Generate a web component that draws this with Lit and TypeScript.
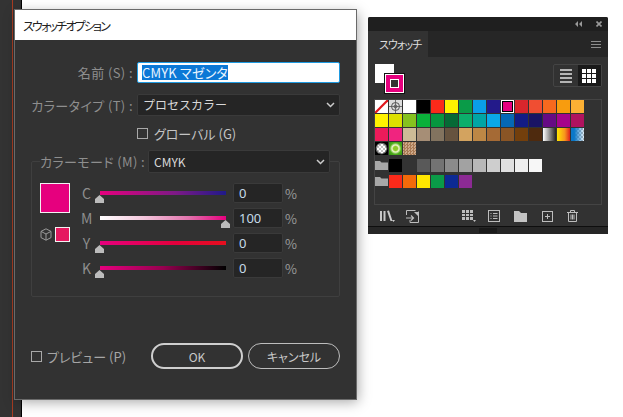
import { LitElement, html, css, svg } from "lit";
import { customElement } from "lit/decorators.js";

const FONT = css`"Noto Sans CJK JP", "Noto Sans", sans-serif`;

const chevron = html`<svg class="chev" width="9" height="6" viewBox="0 0 9 6">
  <path d="M1 1l3.5 3.5L8 1" fill="none" stroke="#ccc" stroke-width="1.5" />
</svg>`;

interface Slider {
  name: string;
  value: number;
  track: string;
}

const SLIDERS: Slider[] = [
  { name: "C", value: 0, track: "linear-gradient(90deg,#e6007e,#7d1a86 60%,#1f1a8a)" },
  { name: "M", value: 100, track: "linear-gradient(90deg,#fff,#f3c6dc 35%,#e274ad 70%,#e6007e)" },
  { name: "Y", value: 0, track: "linear-gradient(90deg,#e6007e,#e4003c 60%,#e60f1e)" },
  { name: "K", value: 0, track: "linear-gradient(90deg,#e6007e,#96004f 50%,#000)" },
];

@customElement("swatch-dialog")
export class SwatchDialog extends LitElement {
  static override styles = css`
    :host {
      display: flex;
      flex-direction: column;
      width: 341px;
      height: 389px;
      background: #323232;
      box-shadow: 0 0 0 1px #6a6a6a, 2px 3px 12px rgba(0, 0, 0, 0.35);
      font-family: ${FONT};
      font-size: 13px;
      font-feature-settings: "palt" 1;
      color: #8e8e8e;
    }
    .title {
      height: 30px;
      flex: none;
      display: flex;
      align-items: center;
      padding-left: 8px;
      background: #fff;
      color: #222;
      font-size: 12px;
      letter-spacing: -1.8px;
    }
    .row {
      display: flex;
      align-items: center;
    }
    .row > label {
      width: 118px;
      margin-right: 4px;
      text-align: right;
      white-space: nowrap;
      letter-spacing: 0.4px;
    }
    .name-row {
      margin-top: 22px;
    }
    .type-row {
      margin-top: 11px;
    }
    .name-input {
      box-sizing: border-box;
      width: 203px;
      height: 21px;
      display: flex;
      align-items: center;
      padding-left: 4px;
      background: #fff;
      border: 1px solid #1f9ae0;
      border-radius: 2px;
      font-size: 13px;
    }
    .name-input span {
      background: #0b78d6;
      color: #e8f4ff;
      line-height: 15px;
      white-space: nowrap;
      letter-spacing: 0.2px;
    }
    .select {
      box-sizing: border-box;
      height: 22px;
      display: flex;
      align-items: center;
      justify-content: space-between;
      padding: 0 4px 0 5px;
      background: #252525;
      border: 1px solid #3a3a3a;
      border-radius: 2px;
      color: #d8d8d8;
      font-size: 12px;
      font-feature-settings: normal;
    }
    .select.wide {
      width: 203px;
      padding-bottom: 1px;
    }
    .check {
      display: flex;
      align-items: center;
      gap: 6px;
      white-space: nowrap;
      color: #c4c4c4;
    }
    .box {
      box-sizing: border-box;
      width: 11px;
      height: 11px;
      border: 1px solid #a8a8a8;
    }
    .global {
      margin: 11px 0 0 122px;
      height: 13px;
    }
    .mode {
      box-sizing: border-box;
      width: 309px;
      height: 136px;
      margin: 21px 0 0 16px;
      border: 1px solid #3f3f3f;
      border-radius: 2px;
    }
    .mode-head {
      display: flex;
      align-items: center;
      height: 23px;
      margin: -12px 9px 0 8px;
    }
    .mode-head label {
      box-sizing: border-box;
      width: 108px;
      white-space: nowrap;
      background: #323232;
      letter-spacing: 0.4px;
    }
    .mode-head .select {
      width: 182px;
      height: 23px;
    }
    .mode-body {
      display: flex;
      padding: 10px 0 0 8px;
    }
    .previews {
      width: 30px;
      display: flex;
      flex-direction: column;
    }
    .big {
      box-sizing: border-box;
      width: 30px;
      height: 30px;
      background: #e6007e;
      border: 1px solid #f2f2f2;
    }
    .gamut {
      display: flex;
      align-items: center;
      justify-content: space-between;
      margin-top: 14px;
    }
    .small {
      box-sizing: border-box;
      width: 15px;
      height: 15px;
      background: #e5195f;
      border: 1px solid #f2f2f2;
    }
    .sliders {
      display: flex;
      flex-direction: column;
      gap: 5px;
      margin-left: 11px;
    }
    .slider-row {
      display: flex;
      align-items: center;
      height: 20px;
    }
    .letter {
      width: 11px;
      text-align: center;
      font-size: 14px;
      color: #8e8e8e;
    }
    .track {
      position: relative;
      width: 126px;
      height: 4px;
      margin: 0 7px 0 8px;
    }
    .thumb {
      position: absolute;
      top: 4px;
      margin-left: -5px;
      display: block;
    }
    .num {
      box-sizing: border-box;
      width: 50px;
      height: 20px;
      display: flex;
      align-items: center;
      padding-left: 5px;
      background: #252525;
      border: 1px solid #3a3a3a;
      border-radius: 2px;
      color: #c6dbe8;
      font-family: "Noto Sans", sans-serif;
      font-size: 13px;
    }
    .pct {
      margin-left: 2px;
      font-size: 13px;
      color: #9a9a9a;
    }
    .footer {
      margin: auto 16px 30px;
      height: 26px;
      display: flex;
      align-items: center;
    }
    .preview {
      width: 120px;
      gap: 5px;
      color: #a6a6a6;
    }
    button {
      box-sizing: border-box;
      width: 92px;
      height: 26px;
      padding: 0;
      background: transparent;
      border: 1px solid #bdbdbd;
      border-radius: 13px;
      color: #c8c8c8;
      font: inherit;
      font-size: 12px;
    }
    button.primary {
      border: 2px solid #cfcfcf;
      margin-right: 5px;
    }
  `;

  override render() {
    return html`
      <div class="title">スウォッチオプション</div>
      <div class="row name-row">
        <label>名前 (S) :</label>
        <div class="name-input"><span>CMYK マゼンタ</span></div>
      </div>
      <div class="row type-row">
        <label>カラータイプ (T) :</label>
        <div class="select wide">プロセスカラー ${chevron}</div>
      </div>
      <div class="check global"><div class="box"></div>グローバル (G)</div>
      <div class="mode">
        <div class="mode-head">
          <label>カラーモード (M) :</label>
          <div class="select">CMYK ${chevron}</div>
        </div>
        <div class="mode-body">
          <div class="previews">
            <div class="big"></div>
            <div class="gamut">
              <svg width="12" height="13" viewBox="0 0 12 13" fill="none" stroke="#9a9a9a">
                <path d="M6 .8l5 2.6v6.2l-5 2.6-5-2.6V3.4zM1 3.4l5 2.6 5-2.6M6 6v6.2" />
              </svg>
              <div class="small"></div>
            </div>
          </div>
          <div class="sliders">
            ${SLIDERS.map(
              (s) => html`<div class="slider-row">
                <span class="letter">${s.name}</span>
                <div class="track" style="background:${s.track}">
                  <svg class="thumb" style="left:${s.value}%" width="9" height="8" viewBox="0 0 9 8">
                    <path d="M4.5 0L9 4v4H0V4z" fill="#bcbcbc" />
                  </svg>
                </div>
                <div class="num">${s.value}</div>
                <span class="pct">%</span>
              </div>`
            )}
          </div>
        </div>
      </div>
      <div class="footer">
        <div class="check preview"><div class="box"></div>プレビュー (P)</div>
        <button class="primary">OK</button>
        <button>キャンセル</button>
      </div>
    `;
  }
}

type Cell = string | { kind: string };

const CHECKER = "repeating-conic-gradient(#bdbdbd 0 25%,#fff 0 50%) 0 0/4px 4px";

const ROWS: Cell[][] = [
  [
    { kind: "none" }, { kind: "reg" }, "#fff", "#000", "#fb2a1a", "#fff200", "#0a9b48", "#0a9ee8",
    "#231a8a", { kind: "selected" }, "#d8262c", "#f04e32", "#f7691e", "#f89c0e", "#fbb034",
  ],
  [
    "#fff200", "#dde000", "#86c21f", "#0bb03a", "#07963f", "#066a36", "#0cae6b", "#00a5a5",
    "#0aa8e8", "#0568b5", "#131c85", "#1a1464", "#660b84", "#a5048b", "#b0135f",
  ],
  [
    "#ec1b5a", "#f0247f", "#cdbb96", "#a68e76", "#82735f", "#66533f", "#d3a35f", "#bd8745",
    "#a56a35", "#8a5525", "#733f0c", "#4e2a0e",
    "linear-gradient(90deg,#fff,#222)",
    "linear-gradient(90deg,#ffe600,#f7941e 60%,#e0201b)",
    `linear-gradient(90deg,#0a78c8,#0a78c8 25%,rgba(10,120,200,.1)),${CHECKER}`,
  ],
  [
    `radial-gradient(circle,rgba(255,255,255,.1) 0 30%,rgba(255,255,255,0) 45%,#000 68%),${CHECKER}`,
    "radial-gradient(circle,#8fca2a 0 22%,#f2f7d0 38%,#4fae1c 62%,#2e8e12)",
    "repeating-conic-gradient(#a97a54 0 25%,#cda98a 0 50%) 0 0/3px 3px",
  ],
];

const GRAYS = [
  "#000", "#333", "#595959", "#737373", "#8b8b8b", "#a2a2a2", "#b8b8b8", "#cecece", "#e0e0e0",
  "#eeeeee", "#f7f7f7",
];
const BRIGHTS = ["#fb2a1a", "#f36a0a", "#ffe600", "#0a9b48", "#0c2a94", "#8c2a94"];

const folder = svg`<path d="M0 2h5l1.5 1.5H13V11H0z" fill="#a8a8a8" />`;

@customElement("swatch-panel")
export class SwatchPanel extends LitElement {
  static override styles = css`
    :host {
      display: flex;
      flex-direction: column;
      width: 240px;
      height: 217px;
      background: #323232;
      font-family: ${FONT};
      font-feature-settings: "palt" 1;
      overflow: hidden;
      border-radius: 2px 2px 0 0;
    }
    .top {
      height: 14px;
      flex: none;
      display: flex;
      align-items: center;
      justify-content: flex-end;
      gap: 14px;
      padding-right: 6px;
      background: #1f1f1f;
    }
    .tabs {
      height: 26px;
      flex: none;
      display: flex;
      align-items: center;
      justify-content: space-between;
      padding-right: 7px;
      background: #262626;
    }
    .tab {
      box-sizing: border-box;
      width: 60px;
      height: 26px;
      display: flex;
      align-items: center;
      padding-left: 11px;
      background: #323232;
      color: #ddd;
      font-size: 11px;
      letter-spacing: -1px;
    }
    .tools {
      display: flex;
      justify-content: space-between;
      flex: none;
      padding: 7px 6px 0 7px;
      box-sizing: border-box;
      height: 42px;
    }
    .fill {
      position: relative;
      width: 19px;
      height: 19px;
      background: #fff;
    }
    .stroke {
      position: absolute;
      left: 10px;
      top: 10px;
      box-sizing: border-box;
      width: 19px;
      height: 19px;
      padding: 4px;
      background: #e6007e;
      border: 1px solid #fff;
      outline: 1px solid #111;
    }
    .stroke div {
      box-sizing: border-box;
      height: 100%;
      background: #333;
      border: 1px solid #fff;
    }
    .toggle {
      display: flex;
      width: 49px;
      height: 23px;
      box-sizing: border-box;
      border: 1px solid #444;
      border-radius: 2px;
    }
    .toggle div {
      flex: 1;
      display: flex;
      align-items: center;
      justify-content: center;
    }
    .toggle .on {
      background: #1a1a1a;
    }
    .list {
      box-sizing: border-box;
      width: 228px;
      height: 106px;
      margin-left: 6px;
      border: 1px solid #444;
      flex: none;
    }
    .cells {
      display: flex;
      height: 14px;
    }
    .cells.group {
      height: 13px;
      margin-top: 3px;
    }
    .cell {
      position: relative;
      width: 13px;
      height: 13px;
      margin-right: 1px;
      flex: none;
    }
    .cell svg {
      display: block;
    }
    .selected {
      box-sizing: border-box;
      background: #e6007e;
      border: 2px solid #000;
    }
    .selected::after {
      content: "";
      position: absolute;
      inset: -2px;
      border: 1px solid #fff;
    }
    .actions {
      display: flex;
      align-items: center;
      height: 20px;
      flex: none;
      padding-left: 12px;
      margin-top: 1px;
    }
    .actions svg {
      display: block;
      flex: none;
    }
    .grip {
      margin-top: auto;
      height: 8px;
      display: flex;
      justify-content: center;
      background: #262626;
      border-top: 1px solid #0e0e0e;
      flex: none;
    }
  `;

  private renderCell(c: Cell) {
    if (typeof c === "string") {
      return html`<div class="cell" style="background:${c}"></div>`;
    }
    if (c.kind === "none") {
      return html`<div class="cell">
        <svg width="13" height="13"><rect width="13" height="13" fill="#fff" />
          <path d="M0 13L13 0" stroke="#e0161c" stroke-width="2.2" /></svg>
      </div>`;
    }
    if (c.kind === "reg") {
      return html`<div class="cell">
        <svg width="13" height="13" fill="none" stroke="#555"><rect width="13" height="13" fill="#ddd" stroke="none" />
          <circle cx="6.5" cy="6.5" r="4" /><circle cx="6.5" cy="6.5" r="1.5" />
          <path d="M6.5 0v13M0 6.5h13" stroke-width=".8" /></svg>
      </div>`;
    }
    return html`<div class="cell selected"></div>`;
  }

  override render() {
    return html`
      <div class="top">
        <svg width="7" height="6" viewBox="0 0 7 6"><path d="M3 0v6L0 3zM7 0v6L4 3z" fill="#9a9a9a" /></svg>
        <svg width="6" height="6" viewBox="0 0 6 6"><path d="M.5.5l5 5M5.5.5l-5 5" stroke="#9a9a9a" stroke-width="1.6" /></svg>
      </div>
      <div class="tabs">
        <div class="tab">スウォッチ</div>
        <svg width="10" height="7" viewBox="0 0 10 7"><path d="M0 .5h10M0 3.5h10M0 6.5h10" stroke="#8c8c8c" /></svg>
      </div>
      <div class="tools">
        <div class="fill"><div class="stroke"><div></div></div></div>
        <div class="toggle">
          <div>
            <svg width="12" height="14" viewBox="0 0 12 14"><path d="M0 1h12M0 5h12M0 9h12M0 13h12" stroke="#b4b4b4" stroke-width="2" /></svg>
          </div>
          <div class="on">
            <svg width="14" height="14" viewBox="0 0 14 14" fill="#fff">
              <path d="M0 0h4v4H0zM5 0h4v4H5zM10 0h4v4h-4zM0 5h4v4H0zM5 5h4v4H5zM10 5h4v4h-4zM0 10h4v4H0zM5 10h4v4H5zM10 10h4v4h-4z" />
            </svg>
          </div>
        </div>
      </div>
      <div class="list">
        ${ROWS.map((r) => html`<div class="cells">${r.map((c) => this.renderCell(c))}</div>`)}
        <div class="cells group">
          <div class="cell"><svg width="13" height="13">${folder}</svg></div>
          ${GRAYS.map((c) => this.renderCell(c))}
        </div>
        <div class="cells group">
          <div class="cell"><svg width="13" height="13">${folder}</svg></div>
          ${BRIGHTS.map((c) => this.renderCell(c))}
        </div>
      </div>
      <div class="actions">
        <svg width="15" height="12" viewBox="0 0 15 12" style="margin-right:11px">
          <path d="M0 1h2v10H0zM3.500 1h2v10h-2zM7 1l2-.5L12.500 11h-2z" fill="#c8c8c8" /><path d="M12 10h3l-1.500 2z" fill="#c8c8c8" />
        </svg>
        <svg width="14" height="13" viewBox="0 0 14 13" fill="none" stroke="#bdbdbd" style="margin-right:42px">
          <path d="M.5 5V.5h9M12.500 1.500v11H4V10" /><path d="M8 2h4.500v4.500z" fill="#bdbdbd" stroke="none" /><path d="M0 8h7M5 5.500L7.500 8 5 10.500" stroke-width="1.200" />
        </svg>
        <svg width="14" height="12" viewBox="0 0 14 12" style="margin-right:12px">
          <path d="M0 0h11v10H0z" fill="#bdbdbd" /><path d="M3.500 0v10M7.500 0v10M0 3.500h11M0 6.500h11" stroke="#333" /><path d="M11 10h3l-1.500 2z" fill="#bdbdbd" />
        </svg>
        <svg width="12" height="12" viewBox="0 0 12 12" fill="none" stroke="#bdbdbd" style="margin-right:14px">
          <rect x=".5" y=".5" width="11" height="11" /><path d="M2.500 3.500h1M5 3.500h4.500M2.500 6h1M5 6h4.500M2.500 8.500h1M5 8.500h4.500" />
        </svg>
        <svg width="13" height="11" viewBox="0 0 13 11" style="margin-right:15px"><path d="M0 0h5l2 2h6v9H0z" fill="#c4c4c4" /></svg>
        <svg width="11" height="11" viewBox="0 0 11 11" fill="none" stroke="#bdbdbd" style="margin-right:14px">
          <rect x=".5" y=".5" width="10" height="10" /><path d="M5.500 3v5M3 5.500h5" />
        </svg>
        <svg width="11" height="12" viewBox="0 0 11 12" fill="none" stroke="#bdbdbd">
          <path d="M0 2.500h11M3.500 2.500V.5h4v2M1.500 2.500v9h8v-9M4 4.500v5M5.500 4.500v5M7 4.500v5" />
        </svg>
      </div>
      <div class="grip">
        <svg width="19" height="7" viewBox="0 0 19 7">
          <path d="M1 1v5M3 1v5M5 1v5M7 1v5M9 1v5M11 1v5M13 1v5M15 1v5M17 1v5" stroke="#0f0f0f" />
        </svg>
      </div>
    `;
  }
}

@customElement("app-root")
export class AppRoot extends LitElement {
  static override styles = css`
    :host {
      display: block;
      position: relative;
      width: 623px;
      height: 417px;
      overflow: hidden;
      background: #fff;
    }
    .app-edge {
      position: absolute;
      left: 0;
      top: 0;
      bottom: 0;
      width: 21px;
      background: linear-gradient(90deg, #333 0 12px, #a63c22 12px 13px, #323232 13px);
      border-right: 1px solid #000;
    }
    swatch-dialog {
      position: absolute;
      left: 15px;
      top: 10px;
    }
    swatch-panel {
      position: absolute;
      left: 368px;
      top: 17px;
    }
  `;

  override render() {
    return html`
      <div class="app-edge"></div>
      <swatch-dialog></swatch-dialog>
      <swatch-panel></swatch-panel>
    `;
  }
}
